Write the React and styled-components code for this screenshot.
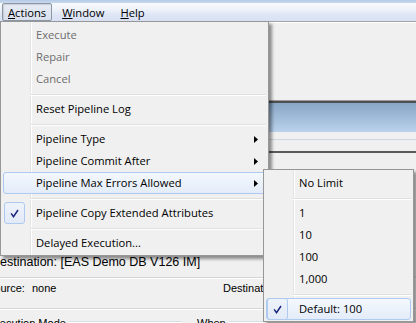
import React from "react";
import styled, { createGlobalStyle, css } from "styled-components";

const GlobalStyle = createGlobalStyle`
  html, body { margin: 0; padding: 0; background: #f0f0f0; }
  body { font-family: "Open Sans", "Liberation Sans", sans-serif; }
`;

const Screen = styled.div`
  position: relative;
  width: 416px;
  height: 323px;
  overflow: hidden;
  background: #f0f0f0;
`;

const TitleEdge = styled.div`
  height: 3px;
  background: linear-gradient(#b4cbe6, #c8d9ee);
`;

const MenuBar = styled.div`
  height: 18px;
  display: flex;
  align-items: stretch;
  gap: 4px;
  padding-left: 2px;
  background: linear-gradient(#f8fafd 0%, #eef2fa 35%, #dee6f5 65%, #d8e1f3 100%);
  font: 11.2px "Open Sans", sans-serif;
`;

const BarItem = styled.div`
  display: flex;
  align-items: center;
  padding: 0 5px;
  border: 1px solid transparent;
  border-radius: 2px;
  color: #000;
  ${(p) =>
    p.$pressed &&
    css`
      border-color: #8c97a6;
      background: linear-gradient(#e7ecf5, #d9e0ed);
      box-shadow: inset 1px 1px 1px rgba(0, 0, 0, 0.12);
    `}
`;

const Key = styled.span`
  text-decoration: underline;
  text-underline-offset: 1px;
`;

const TopPane = styled.div`
  height: 78px;
  border-top: 1px solid #a3a3a3;
  box-shadow: inset 0 1px #ffffff;
`;

const Splitter = styled.div`
  height: 3px;
  background: linear-gradient(#9c9c9c 0 1px, #4f4f4f 1px 3px);
`;

const Band = styled.div`
  height: 29px;
  background: linear-gradient(#88a6c6, #bad2ec);
`;

const Strip = styled.div`
  height: 19px;
  box-sizing: border-box;
  padding-top: 7px;
`;

const StripLine = styled.div`
  height: 1px;
  background: #cbd8e6;
`;

const DarkRule = styled.div`
  height: 2px;
  background: #5a5a5a;
`;

const Lower = styled.div`
  padding-top: 100px;
  margin-left: -13px;
  font: 11px "Liberation Sans", Arial, sans-serif;
  color: #000;
`;

const TitleRow = styled.div`
  height: 18px;
  line-height: 18px;
  padding-left: 4px;
  font-size: 12.5px;
  white-space: nowrap;
`;

const Divider = styled.div`
  margin-top: ${(p) => p.$gap}px;
  border-top: 1px solid #d5d5d5;
  border-bottom: 1px solid #ffffff;
`;

const InfoRow = styled.div`
  margin-top: 1px;
  height: 16px;
  line-height: 16px;
  display: grid;
  grid-template-columns: 45px 191px auto;
  white-space: nowrap;
`;

const GroupRow = styled.div`
  margin-top: 6px;
  display: flex;
  align-items: flex-start;
  line-height: 14px;
  white-space: nowrap;
`;

const Group = styled.div`
  display: flex;
  align-items: flex-start;
  width: ${(p) => (p.$w ? `${p.$w}px` : "auto")};
  flex: ${(p) => (p.$w ? "none" : "1")};
  margin-left: ${(p) => p.$ml || 0}px;
`;

const GroupLine = styled.div`
  flex: 1;
  margin: 5px 0 0 3px;
  border-top: 1px solid #d5dfe5;
  border-bottom: 1px solid #ffffff;
`;

const Menu = styled.div`
  position: absolute;
  left: ${(p) => p.$x}px;
  top: ${(p) => p.$y}px;
  width: ${(p) => p.$w}px;
  box-sizing: border-box;
  padding: 2px 2px 1px;
  border: 1px solid #979797;
  background:
    linear-gradient(to right, transparent 29px, #e2e3e3 29px 30px, #ffffff 30px 31px, transparent 31px) no-repeat 0 0 / 100% 100%,
    #f0f0f0;
  box-shadow: 3px 3px 3px rgba(0, 0, 0, 0.42);
  font: 11.2px "Open Sans", sans-serif;
  z-index: 2;
`;

const Item = styled.div`
  height: 22px;
  box-sizing: border-box;
  display: flex;
  align-items: center;
  border: 1px solid transparent;
  border-radius: 3px;
  color: ${(p) => (p.$disabled ? "#6d6d6d" : "#000000")};
  white-space: nowrap;
  ${(p) =>
    p.$active &&
    css`
      border-color: #aecaf0;
      background: linear-gradient(#f4f8fd, #e3ecf9);
    `}
`;

const CheckSlot = styled.span`
  width: 21px;
  height: 22px;
  margin: -1px 0;
  box-sizing: border-box;
  display: flex;
  align-items: center;
  justify-content: center;
  border-radius: 3px;
  ${(p) =>
    p.$on &&
    css`
      border: 1px solid #aecaf0;
      background: linear-gradient(#eef3fb, #e2eaf7);
    `}
`;

const Label = styled.span`
  margin-left: 11px;
  line-height: 16px;
`;

const Arrow = styled.svg`
  margin-left: auto;
  margin-right: 7px;
  flex: none;
`;

const Sep = styled.div`
  height: 8px;
  box-sizing: border-box;
  padding-top: 4px;
  margin-left: 27px;
  &::after {
    content: "";
    display: block;
    border-top: 1px solid #e0e0e0;
    border-bottom: 1px solid #ffffff;
  }
`;

const CheckMark = () => (
  <svg width="9" height="9" viewBox="0 0 9 9">
    <path d="M1.1 4.4 L3.5 7.6 L8 1" fill="none" stroke="#18247d" strokeWidth="1.5" />
  </svg>
);

const SubArrow = () => (
  <Arrow width="4" height="7" viewBox="0 0 4 7">
    <path d="M0 0 L4 3.5 L0 7 Z" fill="#000" />
  </Arrow>
);

const MenuEntry = ({ label, disabled, active, checked, sub }) => (
  <Item $disabled={disabled} $active={active}>
    <CheckSlot $on={checked}>{checked && <CheckMark />}</CheckSlot>
    <Label>{label}</Label>
    {sub && <SubArrow />}
  </Item>
);

export default function App() {
  return (
    <Screen>
      <GlobalStyle />
      <TitleEdge />
      <MenuBar>
        <BarItem $pressed>
          <span>
            <Key>A</Key>ctions
          </span>
        </BarItem>
        <BarItem>
          <span>
            <Key>W</Key>indow
          </span>
        </BarItem>
        <BarItem>
          <span>
            <Key>H</Key>elp
          </span>
        </BarItem>
      </MenuBar>

      <TopPane />
      <Splitter />
      <Band />
      <Strip>
        <StripLine />
      </Strip>
      <DarkRule />
      <Lower>
        <TitleRow>Destination: [EAS Demo DB V126 IM]</TitleRow>
        <Divider $gap={6} />
        <InfoRow>
          <span>Source:</span>
          <span>none</span>
          <span>Destination:</span>
        </InfoRow>
        <Divider $gap={12} />
        <GroupRow>
          <Group $w={195}>
            <span>Execution Mode</span>
            <GroupLine />
          </Group>
          <Group $ml={15}>
            <span>When</span>
            <GroupLine />
          </Group>
        </GroupRow>
      </Lower>

      <Menu $x={0} $y={21} $w={269}>
        <MenuEntry label="Execute" disabled />
        <MenuEntry label="Repair" disabled />
        <MenuEntry label="Cancel" disabled />
        <Sep />
        <MenuEntry label="Reset Pipeline Log" />
        <Sep />
        <MenuEntry label="Pipeline Type" sub />
        <MenuEntry label="Pipeline Commit After" sub />
        <MenuEntry label="Pipeline Max Errors Allowed" sub active />
        <Sep />
        <MenuEntry label="Pipeline Copy Extended Attributes" checked />
        <Sep />
        <MenuEntry label="Delayed Execution..." />
      </Menu>

      <Menu $x={263} $y={169} $w={151}>
        <MenuEntry label="No Limit" />
        <Sep />
        <MenuEntry label="1" />
        <MenuEntry label="10" />
        <MenuEntry label="100" />
        <MenuEntry label="1,000" />
        <Sep />
        <MenuEntry label="Default: 100" active checked />
      </Menu>
    </Screen>
  );
}
